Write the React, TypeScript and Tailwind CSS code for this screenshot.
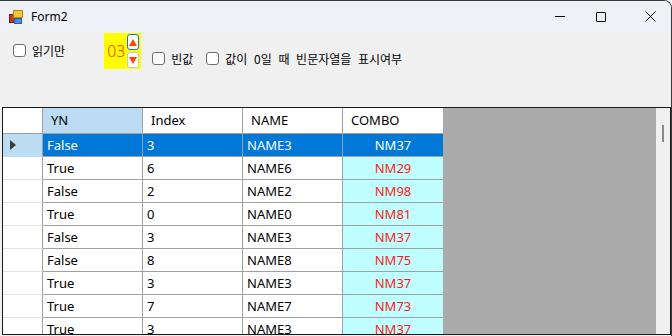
import React from 'react';

const rows = [
  { yn: 'False', idx: '3', name: 'NAME3', combo: 'NM37' },
  { yn: 'True', idx: '6', name: 'NAME6', combo: 'NM29' },
  { yn: 'False', idx: '2', name: 'NAME2', combo: 'NM98' },
  { yn: 'True', idx: '0', name: 'NAME0', combo: 'NM81' },
  { yn: 'False', idx: '3', name: 'NAME3', combo: 'NM37' },
  { yn: 'False', idx: '8', name: 'NAME8', combo: 'NM75' },
  { yn: 'True', idx: '3', name: 'NAME3', combo: 'NM37' },
  { yn: 'True', idx: '7', name: 'NAME7', combo: 'NM73' },
  { yn: 'True', idx: '3', name: 'NAME3', combo: 'NM37' },
];

const Check = () => (
  <span className="inline-block w-[13px] h-[13px] rounded-[3px] border border-[#6e6e6e] bg-white shrink-0" />
);

const AppIcon = () => (
  <svg width="14" height="14" viewBox="0 0 14 14">
    <rect x="0.5" y="4.5" width="5" height="8" fill="#c0392b" stroke="#7a1a10" />
    <rect x="4.5" y="0.5" width="9" height="7" fill="#f5c542" stroke="#b8860b" />
    <rect x="5.5" y="8.5" width="7" height="5" fill="#4a90d9" stroke="#1f5fa8" />
  </svg>
);

export default function App() {
  return (
    <div className="w-[672px] h-[336px] overflow-hidden bg-[#f0f0f0] flex flex-col border-t border-r border-[#3a3a3a] rounded-tr-[8px] font-['Noto_Sans',sans-serif]">
      {/* title bar */}
      <div className="h-[31px] shrink-0 bg-[#eef2f7] flex items-center">
        <div className="pl-[9px] pr-[8px] flex items-center">
          <AppIcon />
        </div>
        <span className="text-[12px] text-black pt-px">Form2</span>
        <div className="ml-auto flex items-center h-full">
          <div className="w-[40px] h-full flex items-center justify-center">
            <span className="block w-[10px] h-px bg-black" />
          </div>
          <div className="w-[40px] ml-px mr-[8px] h-full flex items-center justify-center">
            <span className="block w-[10px] h-[10px] border border-black rounded-[1px]" />
          </div>
          <div className="w-[42px] h-full flex items-center justify-center">
            <svg width="11" height="11" viewBox="0 0 11 11">
              <path d="M0.5 0.5 L10.5 10.5 M10.5 0.5 L0.5 10.5" stroke="#000" strokeWidth="1" />
            </svg>
          </div>
        </div>
      </div>

      {/* toolbar */}
      <div className="h-[75px] shrink-0 flex items-start font-['Noto_Sans_CJK_KR',sans-serif] text-[12px] leading-[13px] text-black">
        <label className="flex items-center gap-[6px] ml-[13px] mt-[12px]">
          <Check />
          <span>읽기만</span>
        </label>
        <div className="ml-[39px] mt-px w-[37px] h-[36px] bg-[#ffff00] flex items-center">
          <span className="ml-[3px] text-[#ff3300] text-[16px] font-light font-['Noto_Sans',sans-serif] leading-none">03</span>
          <div className="ml-auto mr-[2px] flex flex-col gap-[2px]">
            <div className="w-[12px] h-[16px] rounded-[3px] border border-[#1e73d8] bg-white flex items-center justify-center">
              <span className="w-0 h-0 border-l-[4px] border-r-[4px] border-b-[7px] border-l-transparent border-r-transparent border-b-[#ff4500]" />
            </div>
            <div className="w-[12px] h-[16px] rounded-[3px] border border-[#c8c8c8] bg-white flex items-center justify-center">
              <span className="w-0 h-0 border-l-[4px] border-r-[4px] border-t-[7px] border-l-transparent border-r-transparent border-t-[#ff4500]" />
            </div>
          </div>
        </div>
        <label className="flex items-center gap-[6px] ml-[11px] mt-[20px]">
          <Check />
          <span>빈값</span>
        </label>
        <label className="flex items-center gap-[6px] ml-[13px] mt-[20px]">
          <Check />
          <span className="[word-spacing:4px]">값이 0일 때 빈문자열을 표시여부</span>
        </label>
      </div>

      {/* grid */}
      <div className="flex-1 ml-[2px] mb-px border border-[#1a1a1a] bg-[#ababab] flex overflow-hidden text-[13px]">
        <div className="flex flex-col">
          <div className="flex h-[26px] shrink-0 bg-white border-b border-[#a0a0a0]">
            <div className="w-[40px] border-r border-[#a0a0a0]" />
            <div className="w-[100px] border-r border-[#a0a0a0] bg-[#bcdcf4] pl-[8px] pt-px flex items-center">YN</div>
            <div className="w-[100px] border-r border-[#a0a0a0] pl-[8px] pt-px flex items-center">Index</div>
            <div className="w-[100px] border-r border-[#a0a0a0] pl-[8px] pt-px flex items-center">NAME</div>
            <div className="w-[100px] pl-[8px] pt-px flex items-center">COMBO</div>
          </div>
          {rows.map((r, i) => {
            const sel = i === 0;
            return (
              <div key={i} className="flex h-[23px] shrink-0">
                <div className={`w-[40px] border-r border-[#a0a0a0] border-b ${sel ? 'bg-[#bcdcf4] border-b-[#bcdcf4]' : 'bg-white border-b-[#e3e3e3]'} flex items-center pl-[7px]`}>
                  {sel && (
                    <span className="w-0 h-0 border-t-[5px] border-b-[5px] border-l-[6px] border-t-transparent border-b-transparent border-l-[#3c3c3c]" />
                  )}
                </div>
                <div className={`w-[100px] border-r border-b border-[#a0a0a0] pl-[4px] pt-px flex items-center ${sel ? 'bg-[#0078d7] text-white' : 'bg-white text-black'}`}>{r.yn}</div>
                <div className={`w-[100px] border-r border-b border-[#a0a0a0] pl-[4px] pt-px flex items-center ${sel ? 'bg-[#0078d7] text-white' : 'bg-white text-black'}`}>{r.idx}</div>
                <div className={`w-[100px] border-r border-b border-[#a0a0a0] pl-[4px] pt-px flex items-center ${sel ? 'bg-[#0078d7] text-white' : 'bg-white text-black'}`}>{r.name}</div>
                <div className={`w-[100px] border-b border-[#a0a0a0] pt-px flex items-center justify-center ${sel ? 'bg-[#0078d7] text-white' : 'bg-[#c0ffff] text-[#ff1a1a]'}`}>{r.combo}</div>
              </div>
            );
          })}
        </div>
        <div className="flex-1" />
        <div className="w-[14px] bg-[#f0f0f0] flex justify-center pt-[17px]">
          <span className="block w-[2px] h-[17px] bg-[#8a8a8a]" />
        </div>
      </div>
    </div>
  );
}
